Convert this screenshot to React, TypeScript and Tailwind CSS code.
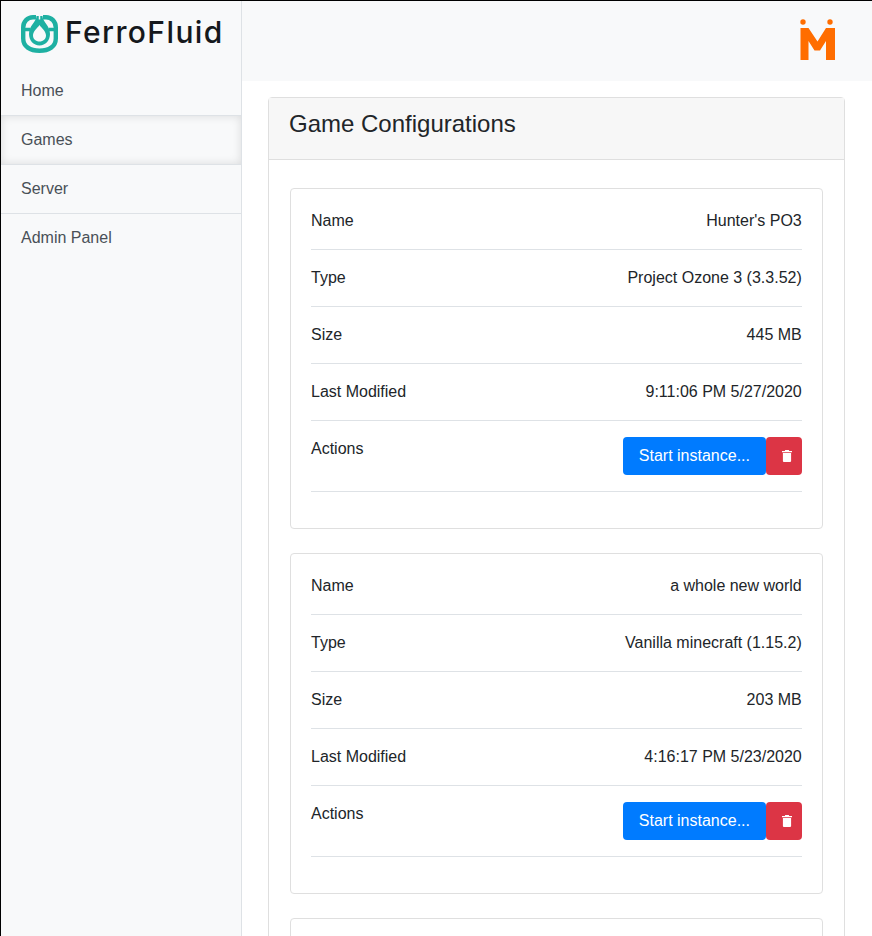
const games = [
  { name: "Hunter's PO3", type: 'Project Ozone 3 (3.3.52)', size: '445 MB', modified: '9:11:06 PM 5/27/2020' },
  { name: 'a whole new world', type: 'Vanilla minecraft (1.15.2)', size: '203 MB', modified: '4:16:17 PM 5/23/2020' },
]

function FerroLogo() {
  return (
    <svg width="38" height="40" viewBox="0 0 38 40">
      <path d="M15 2.200h-3C6.500 2.200 2.200 6.500 2.200 12.500v11C2.200 31.500 9 35.800 18.500 35.800S34.800 31.500 34.800 23.500v-11C34.800 6.500 30.500 2.200 25 2.200h-3" fill="none" stroke="#1eb0a2" strokeWidth="4.400" />
      <path d="M2 14.500h7M28 14.500h7" fill="none" stroke="#1eb0a2" strokeWidth="3.400" />
      <path d="M15.500 1C15.500 7 8 10 8 19C8 25.500 12.500 30.500 18.500 30.500C24.500 30.500 29 25.500 29 19C29 10 21.500 7 21.500 1z" fill="#1eb0a2" />
      <path d="M18.500 0v4.500" stroke="#f8f9fa" strokeWidth="1.5" />
      <path d="M18.500 10C16.500 13 12 16 12 20.500C12 24 14.800 26.500 18.500 26.500C22.200 26.500 25 24 25 20.500C25 16 20.500 13 18.500 10z" fill="#f8f9fa" />
    </svg>
  )
}

function MLogo() {
  return (
    <svg width="38" height="43" viewBox="0 0 38 43" fill="#ff6d00">
      <circle cx="4" cy="4" r="2.700" />
      <circle cx="31" cy="4" r="2.700" />
      <path d="M1.500 10h8l9 13.500 8.500-13.500h9v32h-9V23l-6 9.500h-5.500L9.500 23v19h-8z" />
    </svg>
  )
}

function TrashIcon() {
  return (
    <svg width="10" height="12" viewBox="0 0 10 12" fill="white">
      <path d="M3.200 0h3.600l.4.900H10V2.300H0V.900h2.800z" />
      <path d="M.900 3.100h8.200v8c0 .5-.4.900-.9.900H1.800c-.5 0-.9-.4-.9-.9z" />
    </svg>
  )
}

function Row({ label, children }: { label: string; children: React.ReactNode }) {
  return (
    <div className="flex justify-between items-start border-b border-[#dee2e6] py-4 first:pt-0 text-[#212529]">
      <span>{label}</span>
      {children}
    </div>
  )
}

function GameCard({ game }: { game: (typeof games)[number] }) {
  return (
    <div className="border border-[#dfdfdf] rounded mb-6 px-5 pt-5 pb-9 bg-white">
      <Row label="Name"><span className="pr-[0.25px]">{game.name}</span></Row>
      <Row label="Type"><span className="pr-[0.25px]">{game.type}</span></Row>
      <Row label="Size"><span className="pr-[0.25px]">{game.size}</span></Row>
      <Row label="Last Modified"><span className="pr-[0.25px]">{game.modified}</span></Row>
      <Row label="Actions">
        <div className="flex">
          <button className="h-[38px] px-4 rounded bg-[#007bff] text-white">Start instance...</button>
          <button className="h-[38px] w-9 pl-4 rounded bg-[#dc3545] flex items-center">
            <TrashIcon />
          </button>
        </div>
      </Row>
    </div>
  )
}

export default function App() {
  return (
    <div className="h-[936px] overflow-hidden flex border-t border-l border-black bg-white font-['Liberation_Sans',sans-serif] text-base leading-6">
      <aside className="w-[241px] shrink-0 bg-[#f8f9fa] border-r border-[#dee2e6]">
        <div className="h-[66px] pl-5 pt-[14px] flex gap-[6px]">
          <FerroLogo />
          <span className="font-['Inter',sans-serif] text-[30px] leading-[35px] tracking-[1.4px] font-medium text-[#15181c]">FerroFluid</span>
        </div>
        <nav className="text-[#495057]">
          <div className="h-[49px] px-5 flex items-center border-b border-[#dee2e6]">Home</div>
          <div className="h-[49px] px-5 flex items-center border-b border-[#dee2e6] shadow-[inset_0_0_10px_rgba(0,0,0,0.12)]">Games</div>
          <div className="h-[49px] px-5 flex items-center border-b border-[#dee2e6]">Server</div>
          <div className="h-[47px] px-5 flex items-center">Admin Panel</div>
        </nav>
      </aside>
      <main className="flex-1 min-w-0">
        <header className="h-20 bg-[#f8f9fa] flex justify-end pr-[35px] pt-[17px]">
          <MLogo />
        </header>
        <section className="mt-4 ml-[26px] mr-[27px] border border-[#dfdfdf] rounded">
          <div className="h-[62px] bg-[#f7f7f7] border-b border-[#dfdfdf] px-5 pt-[11px]">
            <h3 className="text-2xl leading-[29px] text-[#212529]">Game Configurations</h3>
          </div>
          <div className="px-[21px] pt-7">
            {games.map((g) => <GameCard key={g.name} game={g} />)}
            <div className="border border-[#dfdfdf] rounded h-[100px]" />
          </div>
        </section>
      </main>
    </div>
  )
}
